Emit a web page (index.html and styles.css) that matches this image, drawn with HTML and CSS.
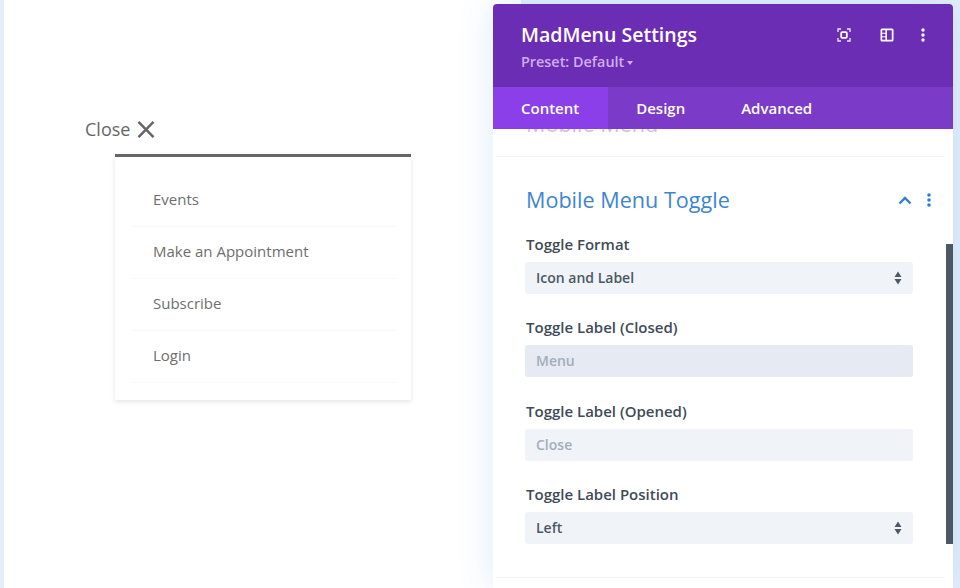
FILE: index.html
```html
<!DOCTYPE html>
<html lang="en">
<head>
<meta charset="utf-8">
<title>MadMenu Settings</title>
<link rel="stylesheet" href="styles.css">
</head>
<body>
<main class="canvas">
  <div class="menu-wrap">
    <button class="toggle">
      <span class="toggle-label">Close</span>
      <svg class="toggle-x" width="18" height="17" viewBox="0 0 18 17"><path d="M1.500 .8 16.500 16.200M16.500 .8 1.500 16.200" fill="none" stroke="#666" stroke-width="2.400"/></svg>
    </button>
    <nav class="dropdown">
      <a class="dd-item">Events</a>
      <a class="dd-item">Make an Appointment</a>
      <a class="dd-item">Subscribe</a>
      <a class="dd-item">Login</a>
    </nav>
  </div>
</main>

<aside class="modal">
  <header class="modal-head">
    <div class="head-text">
      <h1 class="modal-title">MadMenu Settings</h1>
      <div class="preset">Preset: Default <span class="caret"></span></div>
    </div>
    <div class="head-icons">
      <svg class="hi-focus" width="14" height="14" viewBox="0 0 14 14" fill="none"><path d="M1 4V1H4M10 1h3V4M13 10v3H10M4 13H1V10" stroke="#f1e9fb" stroke-width="1.300"/><rect x="4.200" y="4.200" width="5.600" height="5.600" rx="1" fill="none" stroke="#fff" stroke-width="1.800"/></svg>
      <svg class="hi-layout" width="14" height="14" viewBox="0 0 14 14"><path fill-rule="evenodd" fill="#fff" d="M2 .5h10a1.500 1.500 0 0 1 1.500 1.500v10a1.500 1.500 0 0 1-1.500 1.500H2A1.500 1.500 0 0 1 .5 12V2A1.500 1.500 0 0 1 2 .5ZM7 2.200v9.600h4.800V2.200ZM2.200 2.200v2.500h3.200V2.200ZM2.200 5.800v2.400h3.200V5.800ZM2.200 9.300v2.500h3.200V9.300Z"/></svg>
      <svg class="hi-dots" width="4" height="14" viewBox="0 0 4 14" fill="#fff"><circle cx="2" cy="2" r="1.700"/><circle cx="2" cy="7" r="1.700"/><circle cx="2" cy="12" r="1.700"/></svg>
    </div>
  </header>
  <div class="tabs">
    <div class="tab tab-active">Content</div>
    <div class="tab">Design</div>
    <div class="tab">Advanced</div>
  </div>
  <div class="modal-body">
    <div class="prev-section"><div class="prev-title">Mobile Menu</div></div>
    <section class="group">
      <div class="group-head">
        <h2 class="group-title">Mobile Menu Toggle</h2>
        <svg class="chevron" width="14" height="9" viewBox="0 0 14 9"><path d="M1.500 7.500 7 2l5.500 5.500" fill="none" stroke="#2f80d2" stroke-width="2.400"/></svg>
        <svg class="group-dots" width="4" height="14" viewBox="0 0 4 14" fill="#2f80d2"><circle cx="2" cy="2" r="1.800"/><circle cx="2" cy="7" r="1.800"/><circle cx="2" cy="12" r="1.800"/></svg>
      </div>
      <div class="field">
        <div class="label">Toggle Format</div>
        <div class="control select">Icon and Label
          <svg class="arrows" width="8" height="14" viewBox="0 0 8 14" fill="#4c5866"><path d="M4 .5 7.500 6H.5ZM4 13.500.5 8h7Z"/></svg>
        </div>
      </div>
      <div class="field">
        <div class="label">Toggle Label (Closed)</div>
        <div class="control input input-focus">Menu</div>
      </div>
      <div class="field">
        <div class="label">Toggle Label (Opened)</div>
        <div class="control input">Close</div>
      </div>
      <div class="field">
        <div class="label">Toggle Label Position</div>
        <div class="control select">Left
          <svg class="arrows" width="8" height="14" viewBox="0 0 8 14" fill="#4c5866"><path d="M4 .5 7.500 6H.5ZM4 13.500.5 8h7Z"/></svg>
        </div>
      </div>
    </section>
    <div class="scrollbar"></div>
  </div>
</aside>
</body>
</html>
```
FILE: styles.css
```css
* { box-sizing: border-box; }
html, body { height: 100%; margin: 0; overflow: hidden; }
body {
  background: #e4eefa;
  font-family: "Open Sans", "Noto Sans", sans-serif;
  padding-left: 4px;
}
.canvas {
  width: 517px;
  height: 100%;
  background: #fff;
  padding: 115px 0 0 81px;
}
.menu-wrap { display: flex; flex-direction: column; align-items: flex-start; }
.toggle {
  display: flex;
  align-items: center;
  gap: 7px;
  height: 28px;
  padding: 0;
  border: 0;
  background: none;
  font: inherit;
  color: #666;
}
.toggle-label { font-size: 18px; line-height: 28px; }
.dropdown {
  display: flex;
  flex-direction: column;
  width: 296px;
  margin: 11px 0 0 30px;
  padding: 18px 14px 17px 16px;
  background: #fff;
  border-top: 3px solid #666;
  box-shadow: 0 2px 5px rgba(0, 0, 0, .1);
}
.dd-item {
  display: flex;
  align-items: center;
  flex: none;
  height: 52px;
  padding: 0 0 4px 22px;
  font-size: 15px;
  color: #6e6e6e;
  border-bottom: 1px solid #f9f9f9;
}

.modal {
  position: absolute;
  left: 493px;
  top: 4px;
  width: 460px;
  height: 584px;
  display: flex;
  flex-direction: column;
  background: #fff;
  border-radius: 4px 4px 0 0;
  box-shadow: 0 0 36px rgba(43, 135, 218, .16);
}
.modal-head {
  flex: none;
  display: flex;
  justify-content: space-between;
  height: 83px;
  padding: 16px 28px 0 28px;
  background: #6b2db3;
  border-radius: 4px 4px 0 0;
}
.modal-title {
  margin: 0;
  font-size: 19.500px;
  line-height: 30px;
  font-weight: 600;
  color: #fff;
}
.preset {
  margin-top: 2px;
  font-size: 14.400px;
  line-height: 20px;
  font-weight: 600;
  color: #cfaeef;
}
.caret {
  display: inline-block;
  margin-left: -1px;
  vertical-align: 2px;
  border: 3px solid transparent;
  border-top: 4px solid #cfaeef;
  border-bottom: 0;
}
.head-icons { display: flex; gap: 29px; align-items: flex-start; padding-top: 8px; }
.hi-dots { margin-left: -2px; }
.tabs {
  flex: none;
  display: flex;
  height: 42px;
  background: #7b3ac8;
  position: relative;
  z-index: 1;
}
.tab {
  padding: 0 28px;
  font-size: 15px;
  line-height: 42px;
  font-weight: 600;
  color: #fff;
}
.tab-active { padding-right: 29px; background: #8a3fe8; }

.modal-body {
  flex: 1;
  position: relative;
  overflow: hidden;
}
.prev-section {
  height: 28px;
  margin: 0 9px 0 3px;
  overflow: hidden;
  border-bottom: 1px solid #f1f3f6;
}
.prev-title {
  margin: -20px 0 0 30px;
  font-size: 21.600px;
  line-height: 30px;
  color: #c9c2dd;
}
.group {
  margin: 0 9px 0 3px;
  padding: 28px 31px 33px 29px;
  border-bottom: 1px solid #f1f3f6;
}
.group-head {
  display: flex;
  align-items: center;
  height: 30px;
  margin: 0 0 18.750px 1px;
}
.group-title {
  flex: 1;
  margin: 0;
  font-size: 21.600px;
  line-height: 30px;
  font-weight: 400;
  color: #3e85d0;
}
.chevron { margin: 0 15px 0 0; }
.group-dots { margin-right: -18px; }
.field { margin-bottom: 23.500px; }
.field:last-child { margin-bottom: 0; }
.label {
  height: 20px;
  margin: 0 0 8px 1px;
  font-size: 15px;
  line-height: 20px;
  font-weight: 600;
  color: #414b58;
}
.control {
  display: flex;
  align-items: center;
  justify-content: space-between;
  height: 32px;
  padding: 0 11px 1px;
  border-radius: 3px;
  background: #f0f3f8;
  font-size: 14px;
  font-weight: 600;
}
.select { color: #4c5866; }
.input { color: #a3aebd; }
.input-focus { background: #e6eaf2; }
.arrows { margin: 1px 0 0; }
.scrollbar {
  position: absolute;
  right: 0;
  top: 115px;
  width: 7px;
  height: 300px;
  background: #4c5866;
}
```
